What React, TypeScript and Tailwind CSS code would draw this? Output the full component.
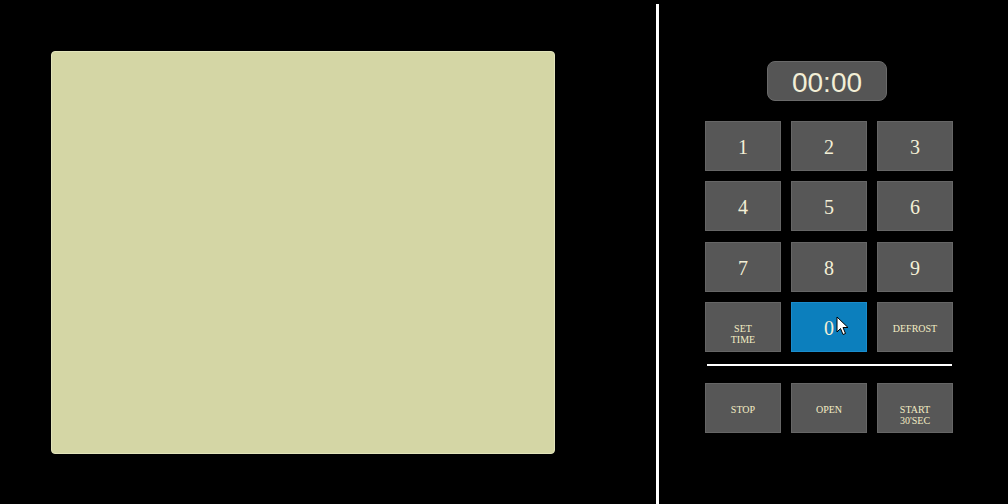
import React from "react";

const btn =
  "relative flex justify-center h-[50px] bg-[#575757] border border-[#666] text-[#f3efd6]";
const serif = { fontFamily: '"Liberation Serif", "Times New Roman", serif' };

function Num({ n, active }: { n: string; active?: boolean }) {
  return (
    <div
      className={
        active
          ? "relative flex items-center justify-center h-[50px] bg-[#0c7fbd] border border-[#1a8ccc] text-[#f3efd6]"
          : btn + " items-center"
      }
    >
      <span className="text-[20px] leading-none pt-[2px]" style={serif}>
        {n}
      </span>
      {active && (
        <svg
          className="absolute left-[44px] top-[13px]"
          width="14"
          height="21"
          viewBox="0 0 14 21"
        >
          <path
            d="M1 1 L1 16 L4.5 12.5 L7 18.5 L9.5 17.5 L7 11.5 L12 11.5 Z"
            fill="#fff"
            stroke="#000"
            strokeWidth="1"
            strokeLinejoin="round"
          />
        </svg>
      )}
    </div>
  );
}

function Label({ lines }: { lines: string[] }) {
  return (
    <div className={btn + " items-start pt-[20px]"}>
      <div
        className="flex flex-col items-center text-[10px] leading-[11px] text-[#f3ecc4]"
        style={serif}
      >
        {lines.map((l) => (
          <span key={l}>{l}</span>
        ))}
      </div>
    </div>
  );
}

export default function App() {
  return (
    <div className="w-[1008px] h-[504px] bg-black flex overflow-hidden">
      <div className="w-[656px] h-full pl-[51px] pt-[51px]">
        <div className="w-[504px] h-[403px] bg-[#d4d6a5] rounded-[4px] border border-[#e2e4bb]" />
      </div>
      <div className="w-[3px] mt-[4px] h-[500px] bg-white" />
      <div className="flex-1 flex flex-col pl-[46px] pt-[61px]">
        <div className="ml-[62px] w-[120px] h-[40px] bg-[#555] border border-[#6a6a6a] rounded-[8px] flex items-center justify-center">
          <span
            className="text-[28px] leading-none text-[#f2eed6] pt-[3px]"
            style={{ fontFamily: '"Liberation Sans", Arial, sans-serif' }}
          >
            00:00
          </span>
        </div>
        <div className="mt-[20px] w-[248px] grid grid-cols-3 gap-x-[10px] gap-y-[10.4px]">
          <Num n="1" />
          <Num n="2" />
          <Num n="3" />
          <Num n="4" />
          <Num n="5" />
          <Num n="6" />
          <Num n="7" />
          <Num n="8" />
          <Num n="9" />
          <Label lines={["SET", "TIME"]} />
          <Num n="0" active />
          <Label lines={["DEFROST"]} />
        </div>
        <div className="mt-[12px] ml-[2px] w-[245px] h-[2px] bg-white" />
        <div className="mt-[17px] w-[248px] grid grid-cols-3 gap-x-[10px]">
          <Label lines={["STOP"]} />
          <Label lines={["OPEN"]} />
          <Label lines={["START", "30'SEC"]} />
        </div>
      </div>
    </div>
  );
}
